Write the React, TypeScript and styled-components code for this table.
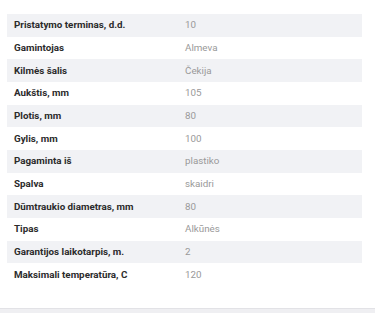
import React from 'react';
import styled, { createGlobalStyle } from 'styled-components';

const specs: [string, string][] = [
    ['Pristatymo terminas, d.d.', '10'],
    ['Gamintojas', 'Almeva'],
    ['Kilmės šalis', 'Čekija'],
    ['Aukštis, mm', '105'],
    ['Plotis, mm', '80'],
    ['Gylis, mm', '100'],
    ['Pagaminta iš', 'plastiko'],
    ['Spalva', 'skaidri'],
    ['Dūmtraukio diametras, mm', '80'],
    ['Tipas', 'Alkūnės'],
    ['Garantijos laikotarpis, m.', '2'],
    ['Maksimali temperatūra, C', '120'],
];

const GlobalStyle = createGlobalStyle`
    html, body {
        margin: 0;
        padding: 0;
        background: #ffffff;
    }
    body {
        font-family: Roboto, "Liberation Sans", sans-serif;
    }
`;

function App() {
    return (
        <Page>
            <GlobalStyle />
            <Content>
                <SpecTable>
                    <colgroup>
                        <LabelCol />
                        <col />
                    </colgroup>
                    <tbody>
                        {specs.map(([label, value], i) => (
                            <Row key={label} $striped={i % 2 === 0}>
                                <Label>{label}</Label>
                                <Value>{value}</Value>
                            </Row>
                        ))}
                    </tbody>
                </SpecTable>
            </Content>
            <Footer />
        </Page>
    );
}

const Page = styled.div`
    width: 375px;
    height: 313px;
    display: flex;
    flex-direction: column;
    overflow: hidden;
`;

const Content = styled.div`
    padding: 14px 13px 0 7px;
    flex: 1;
`;

const SpecTable = styled.table`
    width: 100%;
    border-collapse: collapse;
    table-layout: fixed;
`;

const LabelCol = styled.col`
    width: 171px;
`;

const Row = styled.tr<{ $striped: boolean }>`
    height: 22.67px;
    background: ${props => (props.$striped ? '#f1f2f5' : '#ffffff')};
`;

const Cell = styled.td`
    padding: 0 7px;
    font-size: 9.8px;
    line-height: 12px;
    vertical-align: middle;
    white-space: nowrap;
`;

const Label = styled(Cell)`
    font-weight: 700;
    color: #2b2b2b;
`;

const Value = styled(Cell)`
    color: #999999;
`;

const Footer = styled.div`
    height: 4px;
    border-top: 1px solid #e2e2e6;
    background: #efeff2;
`;

export default App;
